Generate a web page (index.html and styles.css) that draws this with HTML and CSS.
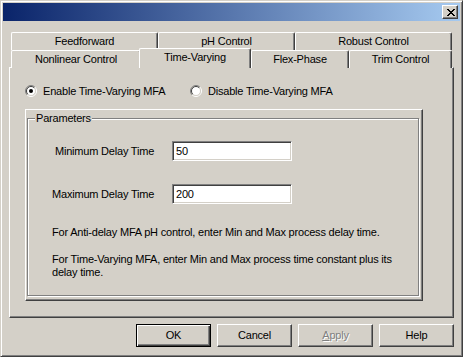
FILE: index.html
```html
<!DOCTYPE html>
<html lang="en">
<head>
  <meta charset="UTF-8">
  <title>MFA Properties</title>
  <link rel="stylesheet" href="styles.css">
</head>
<body>

  <div class="window">
    <div class="titlebar">
      <div class="close">
        <svg width="8" height="7" viewBox="0 0 8 7">
          <path d="M0 0h2v1h-2zM6 0h2v1h-2zM1 1h2v1h-2zM5 1h2v1h-2zM2 2h4v1h-4zM3 3h2v1h-2zM2 4h4v1h-4zM1 5h2v1h-2zM5 5h2v1h-2zM0 6h2v1h-2zM6 6h2v1h-2z" fill="#000"/>
        </svg>
      </div>
    </div>

    <div class="dialog">
      <div class="tab-row">
        <div class="tab tab-feed">Feedforward</div>
        <div class="tab tab-ph">pH Control</div>
        <div class="tab tab-robust">Robust Control</div>
      </div>
      <div class="tab-row tab-row-front">
        <div class="tab tab-nonlinear">Nonlinear Control</div>
        <div class="tab tab-time active">Time-Varying</div>
        <div class="tab tab-flex">Flex-Phase</div>
        <div class="tab tab-trim">Trim Control</div>
      </div>

      <div class="pane">
        <div class="radio-row">
          <label class="radio radio-first">
            <svg width="12" height="12" viewBox="0 0 12 12">
              <circle cx="6" cy="6" r="4.5" fill="#fff"/>
              <path d="M2.1 9.9A5.5 5.5 0 0 1 9.9 2.1" fill="none" stroke="#808080"/>
              <path d="M9.9 2.1A5.5 5.5 0 0 1 2.1 9.9" fill="none" stroke="#fff"/>
              <path d="M2.8 9.2A4.5 4.5 0 0 1 9.2 2.8" fill="none" stroke="#404040"/>
              <path d="M9.2 2.8A4.5 4.5 0 0 1 2.8 9.2" fill="none" stroke="#d4d0c8"/>
              <circle cx="6" cy="6" r="2" fill="#000"/>
            </svg>
            Enable Time-Varying MFA
          </label>
          <label class="radio">
            <svg width="12" height="12" viewBox="0 0 12 12">
              <circle cx="6" cy="6" r="4.5" fill="#fff"/>
              <path d="M2.1 9.9A5.5 5.5 0 0 1 9.9 2.1" fill="none" stroke="#808080"/>
              <path d="M9.9 2.1A5.5 5.5 0 0 1 2.1 9.9" fill="none" stroke="#fff"/>
              <path d="M2.8 9.2A4.5 4.5 0 0 1 9.2 2.8" fill="none" stroke="#404040"/>
              <path d="M9.2 2.8A4.5 4.5 0 0 1 2.8 9.2" fill="none" stroke="#d4d0c8"/>
            </svg>
            Disable Time-Varying MFA
          </label>
        </div>

        <div class="frame">
          <div class="group">
            <span class="legend">Parameters</span>
            <div class="fields">
              <span class="field-label field-min">Minimum Delay Time</span>
              <div class="input">50</div>
              <span class="field-label">Maximum Delay Time</span>
              <div class="input">200</div>
            </div>
            <p class="note">For Anti-delay MFA pH control, enter Min and Max process delay time.</p>
            <p class="note">For Time-Varying MFA, enter Min and Max process time constant plus its delay time.</p>
          </div>
        </div>
      </div>

      <div class="buttons">
        <div class="btn default">OK</div>
        <div class="btn">Cancel</div>
        <div class="btn disabled"><u>A</u>pply</div>
        <div class="btn">Help</div>
      </div>
    </div>
  </div>

</body>
</html>
```

FILE: styles.css
```css
body {
  margin: 0;
  font-family: 'Liberation Sans', Arial, sans-serif;
  font-size: 11px;
  letter-spacing: -0.2px;
  color: #000;
  background-color: #d4d0c8;
}

.window {
  width: 463px;
  height: 357px;
  box-sizing: border-box;
  background-color: #d4d0c8;
  border: 1px solid;
  border-color: #d4d0c8 #404040 #404040 #d4d0c8;
  box-shadow: inset 1px 1px #fff, inset -1px -1px #808080;
  padding: 2px;
}

.titlebar {
  height: 18px;
  box-sizing: border-box;
  padding: 2px 2px 0 0;
  display: flex;
  justify-content: flex-end;
  align-items: flex-start;
  background: linear-gradient(to right, #0a246a, #a6caf0);
}

.close {
  width: 16px;
  height: 14px;
  box-sizing: border-box;
  background-color: #d4d0c8;
  border: 1px solid;
  border-color: #fff #404040 #404040 #fff;
  box-shadow: inset -1px -1px #808080;
  display: flex;
  align-items: center;
  justify-content: center;
  padding-left: 1px;
}

.dialog {
  padding: 11px 6px 0;
}

/* tabs */

.tab-row {
  display: flex;
  height: 18px;
  padding-left: 2px;
}

.tab-row-front {
  height: 17px;
}

.tab {
  box-sizing: border-box;
  height: 18px;
  border-top: 1px solid #fff;
  border-left: 1px solid #fff;
  border-right: 1px solid #404040;
  border-top-left-radius: 2px;
  border-top-right-radius: 2px;
  box-shadow: inset -1px 0 #808080;
  background-color: #d4d0c8;
  line-height: 16px;
  text-align: center;
  white-space: nowrap;
}

.tab-feed { width: 147px; }
.tab-ph { width: 137px; }
.tab-robust { width: 157px; }
.tab-nonlinear { width: 130px; }
.tab-flex { width: 98px; }
.tab-trim { width: 103px; }

.tab-time {
  width: 112px;
  margin-left: -2px;
}

.tab.active {
  position: relative;
  z-index: 1;
  height: 20px;
  margin-top: -2px;
}

.pane {
  width: 445px;
  height: 251px;
  box-sizing: border-box;
  border: 1px solid;
  border-color: #fff #404040 #404040 #fff;
  box-shadow: inset -1px -1px #808080;
  padding: 17px 0 0 15px;
}

.radio-row {
  display: flex;
  height: 12px;
  line-height: 12px;
}

.radio {
  display: flex;
  align-items: center;
  gap: 6px;
}

.radio-first {
  width: 165px;
}

.frame {
  width: 398px;
  height: 192px;
  box-sizing: border-box;
  margin-top: 12px;
  border: 1px solid;
  border-color: #fff #404040 #404040 #fff;
  box-shadow: inset -1px -1px #808080;
  padding: 8px 0 0 1px;
}

.group {
  position: relative;
  width: 392px;
  height: 178px;
  box-sizing: border-box;
  border: 1px solid #808080;
  box-shadow: inset 1px 1px #fff, 1px 1px #fff;
  padding: 22px 0 0 24px;
}

.legend {
  position: absolute;
  top: -7px;
  left: 7px;
  padding: 0 1px;
  line-height: 13px;
  background-color: #d4d0c8;
}

.fields {
  display: grid;
  grid-template-columns: 120px 120px;
  grid-auto-rows: 20px;
  row-gap: 23px;
  align-items: center;
}

.field-min {
  padding-left: 3px;
}

.input {
  height: 20px;
  box-sizing: border-box;
  background-color: #fff;
  border: 1px solid;
  border-color: #808080 #fff #fff #808080;
  box-shadow: inset 1px 1px #404040, inset -1px -1px #d4d0c8;
  padding: 0 3px;
  line-height: 18px;
}

.note {
  margin: 0;
  width: 345px;
  line-height: 13px;
}

.fields + .note {
  margin-top: 22px;
}

.note + .note {
  margin-top: 14px;
}

/* buttons */

.buttons {
  display: flex;
  justify-content: flex-end;
  gap: 6px;
  margin-top: 6px;
}

.btn {
  width: 75px;
  height: 23px;
  box-sizing: border-box;
  border: 1px solid;
  border-color: #fff #404040 #404040 #fff;
  box-shadow: inset -1px -1px #808080;
  line-height: 21px;
  text-align: center;
}

.btn.default {
  border-color: #000;
  box-shadow: inset 1px 1px #fff, inset -1px -1px #404040, inset -2px -2px #808080;
}

.btn.disabled {
  color: #808080;
  text-shadow: 1px 1px #fff;
}
```
